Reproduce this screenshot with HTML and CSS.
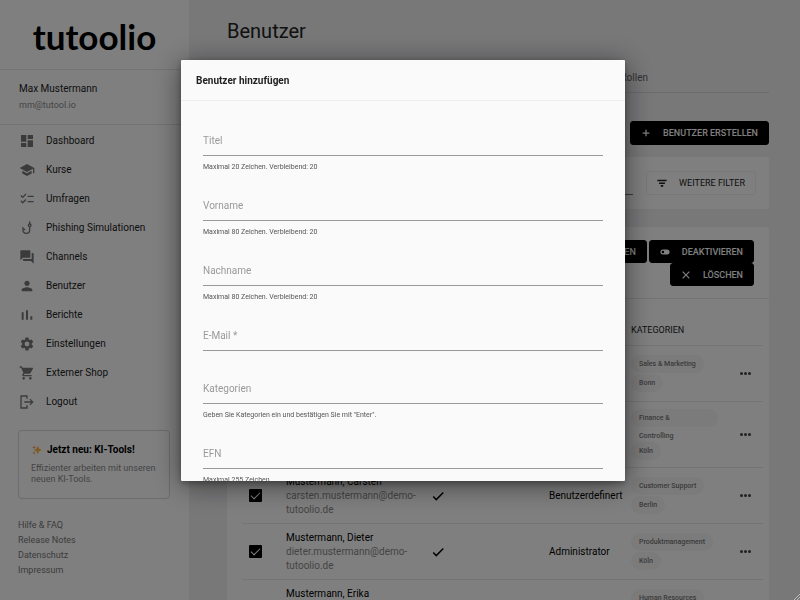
FILE: index.html
```html
<!DOCTYPE html>
<html lang="de">
<head>
    <meta charset="UTF-8">
    <meta name="viewport" content="width=device-width, initial-scale=1.0">
    <title>Benutzer - tutoolio</title>
    <link rel="stylesheet" href="styles.css">
</head>
<body>
    <div class="app">
        <aside class="sidebar">
            <div class="logo">tutoolio</div>
            <div class="account">
                <div class="account-name">Max Mustermann</div>
                <div class="account-mail">mm@tutool.io</div>
            </div>
            <nav class="menu">
                <a href="#"><svg viewBox="0 0 24 24"><path d="M3 13h8V3H3v10zm0 8h8v-6H3v6zm10 0h8V11h-8v10zm0-18v6h8V3h-8z"/></svg>Dashboard</a>
                <a href="#"><svg viewBox="0 0 24 24"><path d="M5 13.18v4L12 21l7-3.82v-4L12 17l-7-3.82zM12 3L1 9l11 6 9-4.91V17h2V9L12 3z"/></svg>Kurse</a>
                <a href="#"><svg viewBox="0 0 24 24"><path d="M22 7h-9v2h9V7zm0 8h-9v2h9v-2zM5.54 11L2 7.46l1.41-1.41 2.12 2.12 4.24-4.24 1.41 1.41L5.54 11zm0 8L2 15.46l1.41-1.41 2.12 2.12 4.24-4.24 1.41 1.41L5.54 19z"/></svg>Umfragen</a>
                <a href="#"><svg viewBox="0 0 24 24"><g fill="none" stroke="#777" stroke-width="2"><path d="M16 10v5a5 5 0 0 1-10 0v-3l3 3M16 2v4"/><circle cx="16" cy="8" r="2"/></g></svg>Phishing Simulationen</a>
                <a href="#"><svg viewBox="0 0 24 24"><path d="M21 6h-2v9H6v2c0 .55.45 1 1 1h11l4 4V7c0-.55-.45-1-1-1zm-4 6V3c0-.55-.45-1-1-1H3c-.55 0-1 .45-1 1v14l4-4h10c.55 0 1-.45 1-1z"/></svg>Channels</a>
                <a href="#"><svg viewBox="0 0 24 24"><path d="M12 12c2.210 0 4-1.790 4-4s-1.790-4-4-4-4 1.790-4 4 1.790 4 4 4zm0 2c-2.670 0-8 1.340-8 4v2h16v-2c0-2.660-5.330-4-8-4z"/></svg>Benutzer</a>
                <a href="#"><svg viewBox="0 0 24 24"><path d="M4 8h3v11H4zM10.500 5h3v14h-3zM17 14h3v5h-3z"/></svg>Berichte</a>
                <a href="#"><svg viewBox="0 0 24 24"><path d="M19.140 12.940c.04-.3.060-.61.060-.94 0-.32-.02-.64-.07-.94l2.030-1.580a.49.49 0 0 0 .12-.61l-1.920-3.320a.488.488 0 0 0-.59-.22l-2.390.96c-.5-.38-1.030-.7-1.620-.94l-.36-2.540a.484.484 0 0 0-.48-.41h-3.840c-.24 0-.43.170-.47.410l-.36 2.540c-.59.240-1.130.570-1.620.940l-2.390-.96c-.22-.08-.47 0-.59.220L2.740 8.870c-.12.210-.08.470.120.610l2.030 1.580c-.05.300-.09.630-.09.940s.02.640.070.940l-2.030 1.580a.49.49 0 0 0-.12.610l1.920 3.320c.12.220.370.290.590.220l2.390-.96c.5.380 1.030.7 1.620.940l.36 2.540c.05.240.240.410.480.410h3.840c.24 0 .44-.17.47-.41l.36-2.540c.59-.24 1.130-.56 1.620-.94l2.390.96c.22.080.470 0 .59-.22l1.920-3.320c.12-.22.070-.47-.12-.61l-2.010-1.580zM12 15.600A3.600 3.600 0 1 1 12 8.400a3.600 3.600 0 0 1 0 7.200z"/></svg>Einstellungen</a>
                <a href="#"><svg viewBox="0 0 24 24"><path d="M7 18c-1.100 0-1.990.9-1.990 2S5.900 22 7 22s2-.9 2-2-.9-2-2-2zM1 2v2h2l3.600 7.590-1.350 2.450c-.16.280-.25.610-.25.960 0 1.100.9 2 2 2h12v-2H7.420c-.14 0-.25-.11-.25-.25l.03-.12.900-1.630h7.450c.75 0 1.410-.41 1.750-1.030l3.580-6.490A1 1 0 0 0 20 4H5.210l-.94-2H1zm16 16c-1.100 0-1.990.9-1.990 2s.89 2 1.990 2 2-.9 2-2-.9-2-2-2z"/></svg>Externer Shop</a>
                <a href="#"><svg viewBox="0 0 24 24"><path d="M13 2v5h-2V4H4v16h7v-3h2v5H2V2zM17 7l5 5-5 5-1.400-1.400L18.200 13H8v-2h10.200l-2.600-2.600z"/></svg>Logout</a>
            </nav>
            <div class="promo">
                <div class="promo-title">
                    <svg viewBox="0 0 24 24"><path fill="#ffb636" d="M14 2l3 7 7 3-7 3-3 7-3-7-7-3 7-3z"/><path fill="#ff8a5c" d="M5 1l1 4 4 1-4 1-1 4-1-4-4-1 4-1zM5 14l1 4 4 1-4 1-1 4-1-4-4-1 4-1z"/></svg>
                    Jetzt neu: KI-Tools!
                </div>
                <p>Effizienter arbeiten mit unseren neuen KI-Tools.</p>
            </div>
            <div class="links">
                <a href="#">Hilfe &amp; FAQ</a>
                <a href="#">Release Notes</a>
                <a href="#">Datenschutz</a>
                <a href="#">Impressum</a>
            </div>
        </aside>

        <main class="content">
            <h1>Benutzer</h1>
            <nav class="tabs"><a href="#">Rollen</a></nav>
            <div class="create">
                <button class="btn"><svg viewBox="0 0 24 24"><path d="M20 13.500h-6.500V20h-3v-6.500H4v-3h6.500V4h3v6.500H20z"/></svg>BENUTZER ERSTELLEN</button>
            </div>
            <section class="card filter">
                <input type="text" class="search" aria-label="Suche">
                <button class="btn btn-light"><svg viewBox="0 0 24 24"><path d="M9 17h6v4H9zM1 4v4h22V4zm4 6.500h14v4H5z"/></svg>WEITERE FILTER</button>
            </section>
            <section class="card users">
                <div class="toolbar">
                    <div class="actions">
                        <button class="btn"><svg viewBox="0 0 24 24"><path d="M17 6H7a6 6 0 0 0 0 12h10a6 6 0 0 0 0-12zm0 9a3 3 0 1 1 0-6 3 3 0 0 1 0 6z"/></svg>AKTIVIEREN</button>
                        <button class="btn"><svg viewBox="0 0 24 24"><path d="M17 6H7a6 6 0 0 0 0 12h10a6 6 0 0 0 0-12zM7 15a3 3 0 1 1 0-6 3 3 0 0 1 0 6z"/></svg>DEAKTIVIEREN</button>
                        <button class="btn"><svg viewBox="0 0 24 24"><path d="M21 5l-2-2-7 7-7-7-2 2 7 7-7 7 2 2 7-7 7 7 2-2-7-7z"/></svg>LÖSCHEN</button>
                    </div>
                </div>
                <table>
                    <colgroup>
                        <col class="col-select"><col class="col-name"><col class="col-active"><col class="col-role"><col><col class="col-more">
                    </colgroup>
                    <thead>
                        <tr><th></th><th></th><th></th><th></th><th>KATEGORIEN</th><th></th></tr>
                    </thead>
                    <tbody>
                        <tr>
                            <td><input type="checkbox" checked aria-label="Auswählen"></td>
                            <td></td>
                            <td></td>
                            <td></td>
                            <td><span class="chip">Sales &amp; Marketing</span><span class="chip">Bonn</span></td>
                            <td><button class="more" aria-label="Mehr"><i></i><i></i><i></i></button></td>
                        </tr>
                        <tr class="tall">
                            <td><input type="checkbox" checked aria-label="Auswählen"></td>
                            <td></td>
                            <td></td>
                            <td></td>
                            <td><span class="chip chip-wrap">Finance &amp;<br>Controlling</span><span class="chip">Köln</span></td>
                            <td><button class="more" aria-label="Mehr"><i></i><i></i><i></i></button></td>
                        </tr>
                        <tr>
                            <td><input type="checkbox" checked aria-label="Mustermann, Carsten"></td>
                            <td>Mustermann, Carsten<div class="mail">carsten.mustermann@demo-tutoolio.de</div></td>
                            <td><svg class="tick" viewBox="0 0 24 24"><path d="M9 16.200L4.800 12l-1.800 1.800L9 20 22 7l-1.800-1.800z"/></svg></td>
                            <td>Benutzerdefinert</td>
                            <td><span class="chip">Customer Support</span><span class="chip">Berlin</span></td>
                            <td><button class="more" aria-label="Mehr"><i></i><i></i><i></i></button></td>
                        </tr>
                        <tr>
                            <td><input type="checkbox" checked aria-label="Mustermann, Dieter"></td>
                            <td>Mustermann, Dieter<div class="mail">dieter.mustermann@demo-tutoolio.de</div></td>
                            <td><svg class="tick" viewBox="0 0 24 24"><path d="M9 16.200L4.800 12l-1.800 1.800L9 20 22 7l-1.800-1.800z"/></svg></td>
                            <td>Administrator</td>
                            <td><span class="chip">Produktmanagement</span><span class="chip">Köln</span></td>
                            <td><button class="more" aria-label="Mehr"><i></i><i></i><i></i></button></td>
                        </tr>
                        <tr>
                            <td><input type="checkbox" checked aria-label="Mustermann, Erika"></td>
                            <td>Mustermann, Erika<div class="mail">erika.mustermann@demo-tutoolio.de</div></td>
                            <td></td>
                            <td></td>
                            <td><span class="chip">Human Resources</span><span class="chip">Köln</span></td>
                            <td><button class="more" aria-label="Mehr"><i></i><i></i><i></i></button></td>
                        </tr>
                    </tbody>
                </table>
            </section>
        </main>
    </div>

    <div class="backdrop">
        <div class="modal" role="dialog" aria-labelledby="modal-title">
            <h2 id="modal-title">Benutzer hinzufügen</h2>
            <form class="modal-body">
                <div class="field">
                    <div class="control"><label for="titel">Titel</label><input id="titel" type="text"></div>
                    <div class="hint">Maximal 20 Zeichen. Verbleibend: 20</div>
                </div>
                <div class="field">
                    <div class="control"><label for="vorname">Vorname</label><input id="vorname" type="text"></div>
                    <div class="hint">Maximal 80 Zeichen. Verbleibend: 20</div>
                </div>
                <div class="field">
                    <div class="control"><label for="nachname">Nachname</label><input id="nachname" type="text"></div>
                    <div class="hint">Maximal 80 Zeichen. Verbleibend: 20</div>
                </div>
                <div class="field field-plain">
                    <div class="control"><label for="email">E-Mail *</label><input id="email" type="email"></div>
                </div>
                <div class="field">
                    <div class="control"><label for="kategorien">Kategorien</label><input id="kategorien" type="text"></div>
                    <div class="hint">Geben Sie Kategorien ein und bestätigen Sie mit "Enter".</div>
                </div>
                <div class="field">
                    <div class="control"><label for="efn">EFN</label><input id="efn" type="text"></div>
                    <div class="hint">Maximal 255 Zeichen</div>
                </div>
            </form>
        </div>
        <svg class="grip" viewBox="0 0 6 6"><path d="M0 6L6 0M3 6L6 3"/></svg>
    </div>
</body>
</html>
```

FILE: styles.css
```css
* {
    box-sizing: border-box;
}

body {
    font-family: Roboto, "Liberation Sans", sans-serif;
    font-size: 10px;
    line-height: 14px;
    color: #222;
    background-color: #f0f0f3;
    margin: 0;
    height: 100vh;
    overflow: hidden;
}

a {
    color: inherit;
    text-decoration: none;
}

.app {
    display: flex;
    height: 100vh;
    overflow: hidden;
}

/* Sidebar */
.sidebar {
    width: 189px;
    flex-shrink: 0;
    background-color: white;
}

.logo {
    height: 70px;
    padding-top: 14px;
    border-bottom: 1px solid #e6e6e6;
    font-family: Lato, sans-serif;
    font-size: 35px;
    font-weight: 700;
    line-height: 44px;
    text-align: center;
    color: black;
}

.account {
    height: 55px;
    padding: 12px 19px;
    border-bottom: 1px solid #e6e6e6;
}

.account-mail {
    font-size: 9px;
    line-height: 18px;
    color: #888;
}

.menu {
    display: flex;
    flex-direction: column;
    padding: 1px 0 0 19px;
    margin-bottom: 14px;
}

.menu a {
    display: flex;
    align-items: center;
    gap: 11px;
    height: 29px;
}

.menu svg {
    width: 16px;
    height: 16px;
    fill: #777;
}

.promo {
    margin: 0 19px 0 18px;
    padding: 12px;
    height: 69px;
    border: 1px solid #d8d8d8;
    border-radius: 4px;
}

.promo-title {
    display: flex;
    align-items: center;
    gap: 4px;
    font-weight: 700;
    color: black;
}

.promo-title svg {
    width: 12px;
    height: 10px;
}

.promo p {
    margin: 6px 0 0;
    font-size: 9px;
    line-height: 11px;
    color: #888;
}

.links {
    display: flex;
    flex-direction: column;
    padding: 19px 18px;
    font-size: 9px;
    line-height: 15px;
    color: #777;
}

/* Content */
.content {
    flex: 1;
    min-width: 0;
    padding: 16px 31px 0 38px;
}

h1 {
    margin: 0;
    font-size: 20px;
    font-weight: 400;
    line-height: 30px;
}

.tabs {
    display: flex;
    justify-content: flex-end;
    margin-top: 18px;
    padding-right: 121px;
    height: 29px;
    line-height: 28px;
    color: #666;
    border-bottom: 1px solid #d9d9dc;
}

.create {
    display: flex;
    justify-content: flex-end;
    margin: 28px 0 12px;
}

.btn {
    display: flex;
    align-items: center;
    gap: 12px;
    height: 24px;
    padding: 0 10px;
    border: 1px solid black;
    border-radius: 3px;
    background-color: black;
    color: white;
    font: 500 9px Roboto, sans-serif;
    cursor: pointer;
}

.btn svg {
    width: 10px;
    height: 10px;
    fill: currentColor;
}

.btn-light {
    background-color: white;
    border-color: #f0f0f0;
    color: #222;
    font-weight: 400;
}

.card {
    background-color: white;
    border-radius: 3px;
}

.filter {
    display: flex;
    gap: 13px;
    padding: 14px 13px;
    margin-bottom: 18px;
}

.search {
    flex: 1;
    border: 0;
    border-bottom: 1px solid #777;
    background: none;
}

.toolbar {
    display: flex;
    justify-content: flex-end;
    padding: 13px 15px 12px;
    border-bottom: 1px solid #e6e6e6;
}

.actions {
    display: flex;
    flex-wrap: wrap;
    justify-content: flex-end;
    column-gap: 2px;
    width: 50%;
}

.actions .btn {
    height: 23px;
}

table {
    width: calc(100% - 21px);
    margin-left: 15px;
    table-layout: fixed;
    border-collapse: separate;
    border-spacing: 0;
}

.col-select {
    width: 44px;
}

.col-name {
    width: 145px;
}

.col-active {
    width: 118px;
}

.col-role {
    width: 82px;
}

.col-more {
    width: 28px;
}

th,
td {
    padding: 0;
    text-align: left;
    border-bottom: 1px solid #e9e9e9;
}

th {
    height: 47px;
    padding-top: 15px;
    font-size: 9px;
    font-weight: 400;
}

td {
    height: 56px;
    color: black;
}

.tall td {
    height: 66px;
}

td input {
    appearance: none;
    display: grid;
    place-items: center;
    width: 13px;
    height: 13px;
    margin: 0 0 0 7px;
    border-radius: 1px;
    background-color: black;
}

td input:checked::after {
    content: "";
    width: 8px;
    height: 4px;
    margin-bottom: 2px;
    border: solid white;
    border-width: 0 0 1px 1px;
    transform: rotate(-45deg);
}

.mail {
    width: 130px;
    color: #888;
}

.tick {
    display: block;
    width: 14px;
    height: 14px;
}

.chip {
    display: block;
    width: fit-content;
    height: 18px;
    margin: 1px 0;
    padding: 0 8px;
    border-radius: 9px;
    background-color: #f6f6f6;
    color: #777;
    font-size: 7px;
    font-weight: 500;
    line-height: 18px;
}

.chip-wrap {
    width: 87px;
    margin-bottom: 15px;
}

.more {
    display: flex;
    gap: 1px;
    padding: 0;
    margin-left: 5px;
    border: 0;
    background: none;
}

.more i {
    width: 3px;
    height: 3px;
    border-radius: 50%;
    background-color: #444;
}

/* Modal */
.backdrop {
    position: fixed;
    inset: 0;
    display: flex;
    padding: 60px 175px 119px 181px;
    background-color: rgba(0, 0, 0, 0.5);
}

.modal {
    display: flex;
    flex-direction: column;
    flex: 1;
    background-color: #fafafa;
    border-radius: 1px;
    box-shadow: 0 4px 28px rgba(0, 0, 0, 0.5), 0 2px 6px rgba(0, 0, 0, 0.3);
}

.modal h2 {
    margin: 0;
    padding: 2px 15px 0;
    border-bottom: 1px solid #eee;
    font-size: 10px;
    font-weight: 700;
    line-height: 38px;
}

.modal-body {
    flex: 1;
    padding: 27px 22px 0;
    overflow-y: auto;
    scrollbar-width: none;
}

.field {
    margin-bottom: 21px;
}

.field-plain {
    margin-bottom: 25px;
}

.control {
    display: grid;
    height: 28px;
    border-bottom: 1px solid #999;
}

.control label,
.control input {
    grid-area: 1 / 1;
}

.control label {
    line-height: 26px;
    color: #999;
}

.control input {
    border: 0;
    padding: 0;
    background: none;
    font: inherit;
    outline: none;
}

.hint {
    padding-top: 6px;
    font-size: 7px;
    line-height: 10px;
    color: #555;
}

.grip {
    position: absolute;
    right: 0;
    bottom: 0;
    width: 6px;
    height: 6px;
    stroke: #bbb;
    stroke-width: 1;
}
```
